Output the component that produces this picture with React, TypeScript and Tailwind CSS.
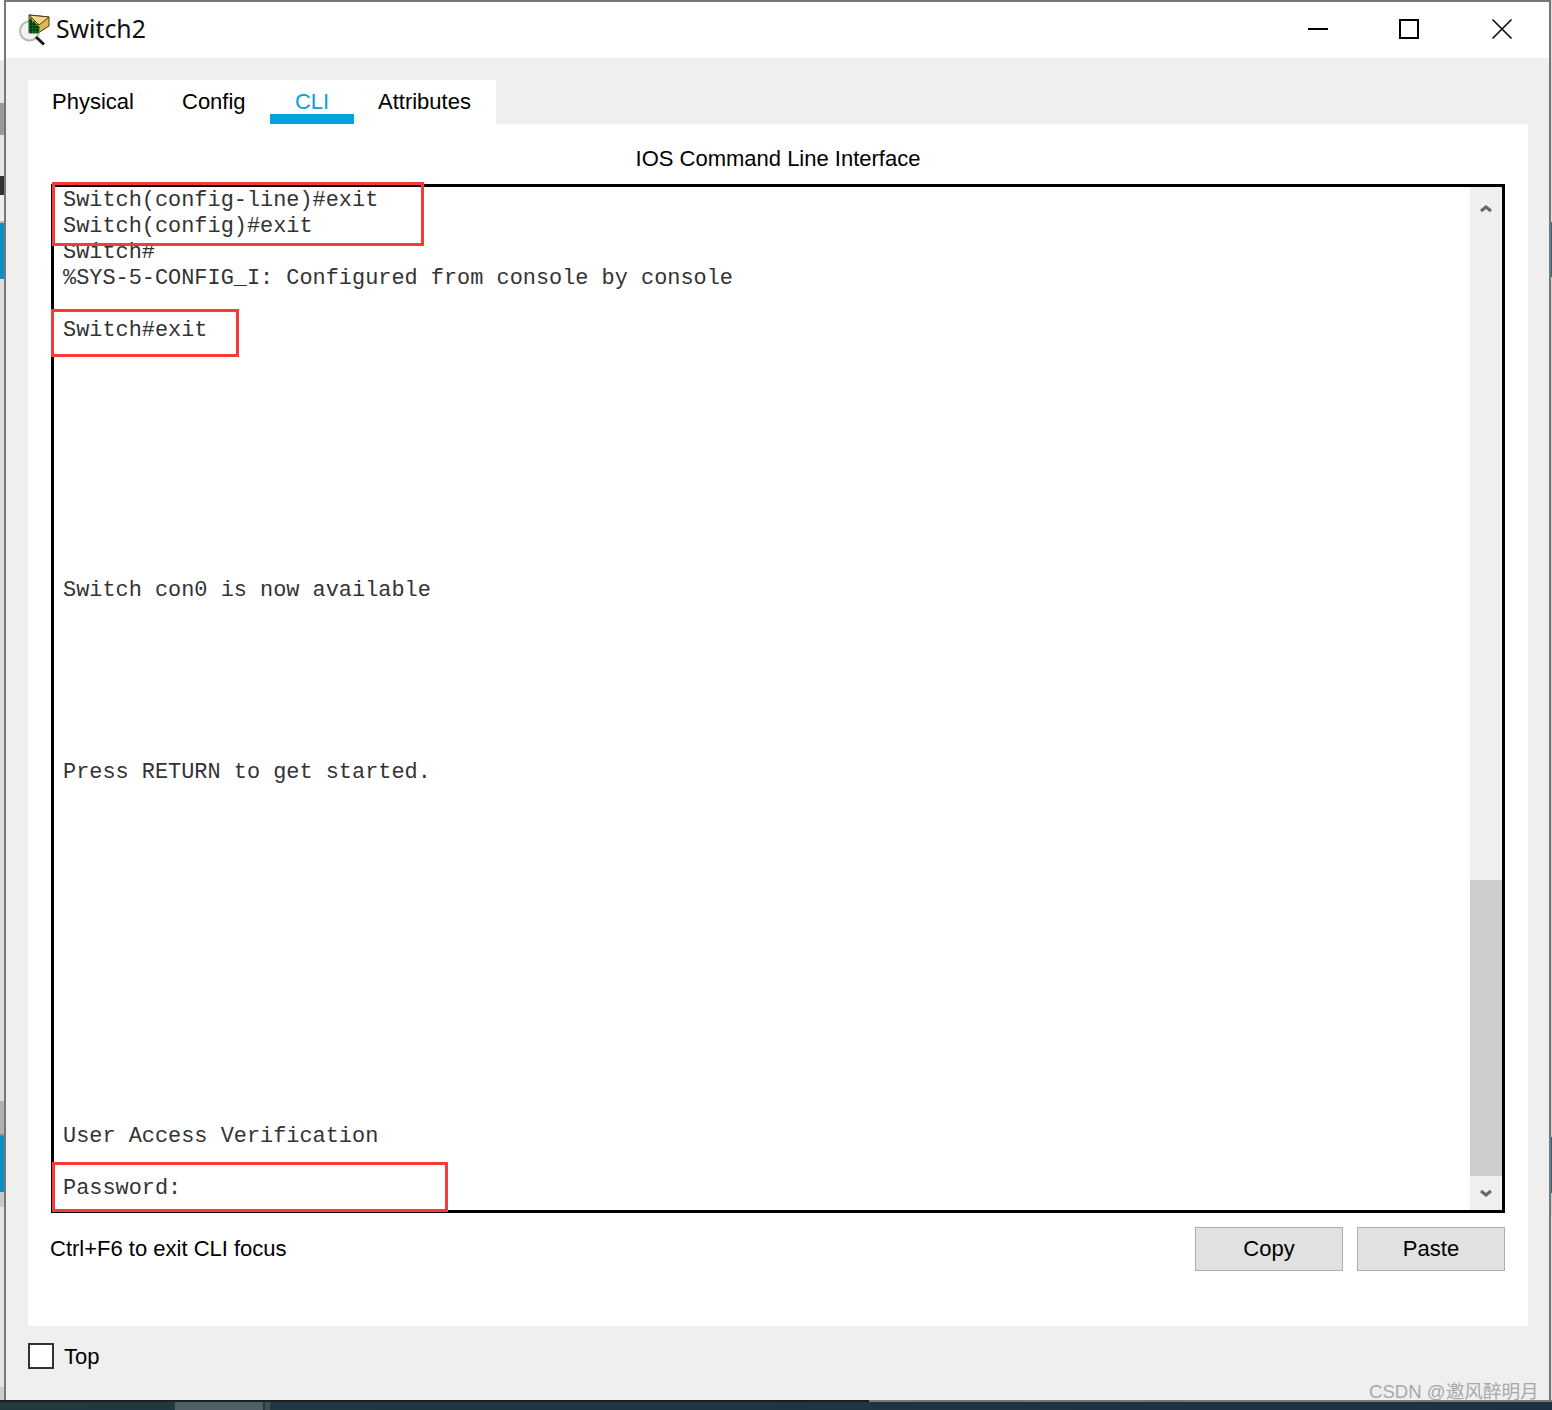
const leftStrip: [number, string][] = [
  [60, "#ffffff"], [43, "#e6e6e6"], [32, "#9a9a9a"], [41, "#e6e6e6"], [19, "#333333"], [26, "#eeeeee"], [2, "#bbbbbb"],
  [56, "#0a8fc6"], [824, "#dedede"], [33, "#b0b0b0"], [2, "#888888"], [56, "#0a8fc6"], [15, "#c8c8c8"], [180, "#e4e4e4"], [13, "#cccccc"],
];
const rightStrip: [number, string][] = [
  [222, "#dddddd"], [5, "#1c7a9c"], [50, "#136f8f"], [860, "#cccccc"], [56, "#136f8f"], [22, "#c8c8c8"], [185, "#dddddd"],
];

const lines = [
  "Switch(config-line)#exit",
  "Switch(config)#exit",
  "Switch#",
  "%SYS-5-CONFIG_I: Configured from console by console",
  "",
  "Switch#exit",
  "", "", "", "", "", "", "", "", "",
  "Switch con0 is now available",
  "", "", "", "", "", "",
  "Press RETURN to get started.",
  "", "", "", "", "", "", "", "", "", "", "", "", "",
  "User Access Verification",
  "",
  "Password:",
];

function TitleIcon() {
  return (
    <svg width="32" height="32" viewBox="0 0 32 32" className="shrink-0">
      <circle cx="10.5" cy="17" r="9.5" fill="#f3f3f3" stroke="#b8b8b8" strokeWidth="2" />
      <path d="M17 23l8 7.5" stroke="#161616" strokeWidth="3" />
      <path d="M10 1l20 2v9l-11 7-9 0z" fill="#e0b558" stroke="#4a3c14" strokeWidth="1" />
      <path d="M10 1l20 2-10 8z" fill="#f2d98c" stroke="#4a3c14" strokeWidth="1" />
      <path d="M10 4l9 8 2 1-1 6h-10z" fill="#0f8a22" />
      <path d="M10 7h3M10 10h7M10 13h10M10 16h10M12 4v15M15 7v12M18 10v9" stroke="#03220a" strokeWidth="1" />
    </svg>
  );
}

function Chevron({ up }: { up?: boolean }) {
  return (
    <svg width="14" height="10" viewBox="0 0 14 10">
      <path d={up ? "M2 8l5-4 5 4" : "M2 2l5 4 5-4"} fill="none" stroke="#666666" strokeWidth="3" />
    </svg>
  );
}

export default function App() {
  return (
    <div className="w-[1552px] h-[1410px] flex flex-col overflow-hidden bg-white relative font-['Liberation_Sans',Arial,sans-serif] text-black">
      <div className="flex h-[1400px]">
        <div className="w-[4px] flex flex-col shrink-0">
          {leftStrip.map(([h, c], i) => (
            <div key={i} style={{ height: h, background: c }} />
          ))}
        </div>
        <div className="w-[1547px] flex flex-col border-x-2 border-t-2 border-[#777777] bg-[#efefef]">
          <div className="h-[56px] bg-white flex items-center shrink-0 pl-[13px]">
            <TitleIcon />
            <span className="ml-[5px] pb-[4px] text-[24.8px] leading-none font-['Noto_Sans',sans-serif] text-[#111111]">Switch2</span>
            <div className="ml-auto flex items-center h-full pb-[2px]">
              <svg width="22" height="22" viewBox="0 0 22 22" className="mr-[69px]"><path d="M1 11h20" stroke="#000" strokeWidth="2" /></svg>
              <svg width="22" height="22" viewBox="0 0 22 22" className="mr-[71px]"><rect x="2" y="2" width="18" height="18" fill="none" stroke="#000" strokeWidth="2" /></svg>
              <svg width="22" height="22" viewBox="0 0 22 22" className="mr-[36px]"><path d="M1.5 1.5l19 19M20.5 1.5l-19 19" stroke="#111" strokeWidth="1.7" /></svg>
            </div>
          </div>
          <div className="mt-[22px] ml-[22px] w-[1500px] flex flex-col">
            <div className="flex w-[468px] h-[44px] bg-white text-[22px] leading-none">
              <div className="pl-[24px] w-[130px] pt-[11px]">Physical</div>
              <div className="pl-[24px] w-[112px] pt-[11px]">Config</div>
              <div className="w-[84px] pt-[11px] text-center text-[#0aa0dc] border-b-[10px] border-[#06a0dc]">CLI</div>
              <div className="pl-[24px] w-[142px] pt-[11px]">Attributes</div>
            </div>
            <div className="h-[1202px] bg-white flex flex-col px-[23px] relative">
              <div className="h-[60px] pt-[24px] text-center text-[22px] leading-[22px]">IOS Command Line Interface</div>
              <div className="h-[1029px] w-[1454px] border-[3px] border-black flex relative">
                <pre className="flex-1 pl-[9px] pt-[1px] font-['Liberation_Mono','Courier_New',monospace] text-[21.9px] leading-[26px] text-[#333333] overflow-hidden">
                  {lines.join("\n")}
                </pre>
                <div className="w-[32px] bg-[#efefef] flex flex-col items-center shrink-0">
                  <div className="h-[42px] flex items-center justify-center"><Chevron up /></div>
                  <div className="flex-1" />
                  <div className="w-full h-[296px] bg-[#cdcdcd]" />
                  <div className="h-[34px] flex items-center justify-center pt-[2px]"><Chevron /></div>
                </div>
                <div className="absolute left-[-2px] top-[-5px] w-[372px] h-[64px] border-[3px] border-[#f83a3a]" />
                <div className="absolute left-[-3px] top-[122px] w-[188px] h-[48px] border-[3px] border-[#f83a3a]" />
                <div className="absolute left-[-2px] top-[975px] w-[396px] h-[50px] border-[3px] border-[#f83a3a]" />
              </div>
              <div className="flex items-center mt-[14px] h-[44px] text-[22px] leading-none">
                <span className="-ml-[1px] pb-[1px]">Ctrl+F6 to exit CLI focus</span>
                <button className="ml-auto w-[148px] h-[44px] pb-[1px] bg-[#e1e1e1] border border-[#adadad]">Copy</button>
                <button className="ml-[14px] w-[148px] h-[44px] pb-[1px] bg-[#e1e1e1] border border-[#adadad]">Paste</button>
              </div>
            </div>
            <div className="flex items-center h-[60px] text-[22px]">
              <div className="w-[26px] h-[26px] bg-white border-[2px] border-[#333333]" />
              <span className="ml-[10px]">Top</span>
            </div>
          </div>
        </div>
        <div className="w-[1px] flex flex-col shrink-0">
          {rightStrip.map(([h, c], i) => (
            <div key={i} style={{ height: h, background: c }} />
          ))}
        </div>
      </div>
      <div className="h-[10px] flex flex-col bg-[#1f3540]">
        <div className="h-[2px] flex shrink-0">
          <div className="w-[869px] bg-[#1a1f20]" />
          <div className="flex-1 bg-[#777777]" />
        </div>
        <div className="flex-1 flex bg-gradient-to-r from-[#203a40] to-[#1f3045]">
          <div className="ml-[175px] w-[88px] bg-[#4f6166]" />
          <div className="ml-[2px] w-[5px] bg-[#3f4f58]" />
        </div>
      </div>
      <div className="absolute left-[1369px] top-[1380px] text-[18.6px] leading-[24px] whitespace-nowrap text-[#a8a8a8] font-['Liberation_Sans','Noto_Sans_CJK_SC',sans-serif]">
        CSDN @邀风醉明月
      </div>
    </div>
  );
}
